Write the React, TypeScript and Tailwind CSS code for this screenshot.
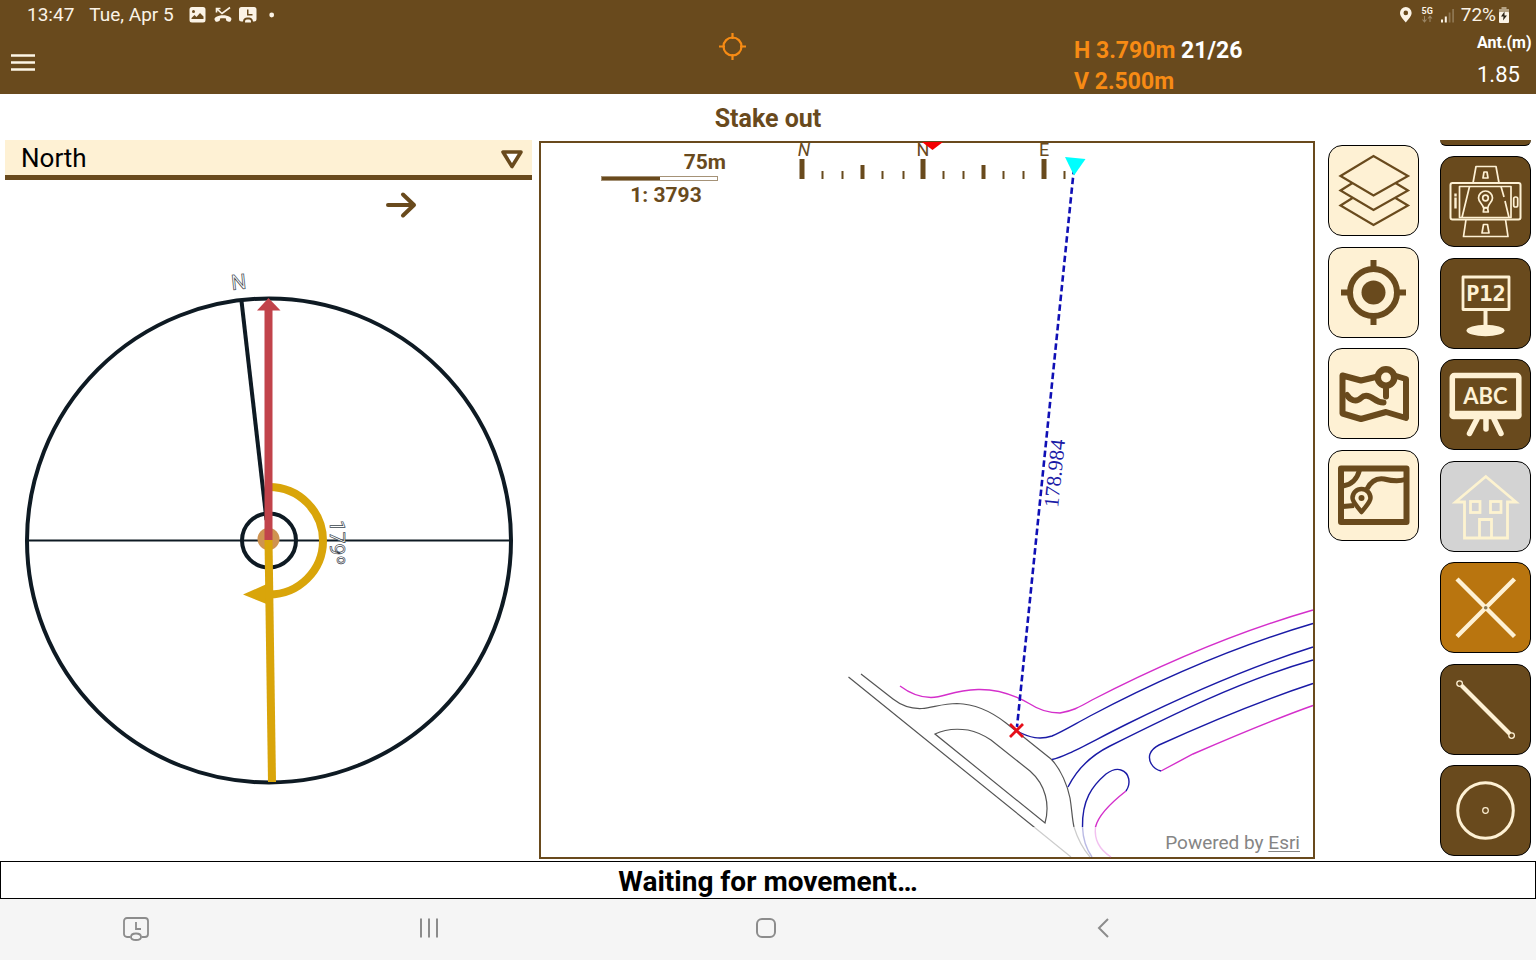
import type { ReactNode } from 'react';
import { useState } from 'react';

const directions = ['North', 'Reference', 'Forward'];

const majorTicks = [802, 923, 1044];
const middleTicks = [862, 983];
const minorTicks = [822, 842, 882, 903, 943, 963, 1003, 1023, 1064];

interface IToolButton {
  id: string;
  label: string;
  className: string;
  icon: ReactNode;
}

const mapTools: IToolButton[] = [
  {
    id: 'layers',
    label: 'Layers',
    className: 'bg-[#fef1d4] text-[#694a1d]',
    icon: (
      <g strokeWidth={2.2}>
        <path d="M12.5 31 45.5 11 80 31 45.5 50.5Z" />
        <path d="M24.5 38 12.5 45.5 45.5 65 80 45.5 67.5 38" />
        <path d="M24.5 53 12.5 60.5 45.5 80 80 60.5 67.5 53" />
      </g>
    ),
  },
  {
    id: 'center',
    label: 'Center position',
    className: 'bg-[#fef1d4] text-[#694a1d]',
    icon: (
      <g strokeWidth={6}>
        <circle cx={45.5} cy={45.5} r={23.5} />
        <circle cx={45.5} cy={45.5} r={12} fill="currentColor" stroke="none" />
        <path d="M45.5 13v8M45.5 70v8M13 45.5h8M70 45.5h8" />
      </g>
    ),
  },
  {
    id: 'base-map',
    label: 'Base map',
    className: 'bg-[#fef1d4] text-[#694a1d]',
    icon: (
      <g strokeWidth={6} strokeLinejoin="round" strokeLinecap="round">
        <path d="M50 28.5 33 32.5 14.5 27.5V65.5L33 71 58 64 78 70V31L68 28" />
        <path d="M19 47C22 52 28 55 33 50C37 46 42 48 46 51C50 54 53 54.500 55.500 54.500" />
        <circle cx={58} cy={29.5} r={8.2} strokeWidth={6.5} />
        <path d="M58 38v10.500" />
      </g>
    ),
  },
  {
    id: 'location-map',
    label: 'Location map',
    className: 'bg-[#fef1d4] text-[#694a1d]',
    icon: (
      <g strokeWidth={6}>
        <rect x={13} y={18.5} width={65.5} height={53.5} strokeLinejoin="round" />
        <path d="M31.500 20Q28 34 15 36" strokeWidth={5} />
        <path d="M39 39C43 31 49 28 56 29C64 31 70 32 77 29.500" strokeWidth={5} />
        <path d="M15 56.500 26 55.500" strokeWidth={5} />
        <path
          d="M33.500 62C29 56 24.500 52 24.500 48A9 9 0 0 1 42.500 48C42.500 52 38 56 33.500 62Z"
          fill="#fef1d4"
          strokeWidth={4.5}
          strokeLinejoin="round"
        />
        <circle cx={33.5} cy={48} r={3} fill="currentColor" stroke="none" />
      </g>
    ),
  },
];

const stakeTools: IToolButton[] = [
  {
    id: 'rotate',
    label: 'Rotate view',
    className: 'bg-[#694a1d] text-[#fef1d4]',
    icon: (
      <g strokeWidth={1.7} strokeLinejoin="round">
        <rect x={10.5} y={27} width={70} height={36.5} rx={2} strokeWidth={2} />
        <rect x={19.5} y={30.5} width={51.5} height={31} />
        <path d="M15.500 37.500v15" strokeWidth={2.4} strokeDasharray="3 1 11" />
        <rect x={73.7} y={41} width={4} height={10} rx={1.8} />
        <path d="M33 27 36 10.500H56L59 27M29.500 30.500 22 61.500M61 30.500 64 41M65 45 69 61.500M26 63.500 23.500 80.500H68L65.500 63.500" />
        <path d="M44 16h3l1 6h-5ZM43.500 68.500h4l1.500 8.500h-7ZM44 51.500h3.500l.8 4.500h-5Z" />
        <path d="M43.500 52C43 48 38.500 46 38.500 42A7 7 0 0 1 52.500 42C52.500 46 48 48 47.800 52Z" />
        <circle cx={45.5} cy={42} r={2.8} />
      </g>
    ),
  },
  {
    id: 'point',
    label: 'Stake out point',
    className: 'bg-[#694a1d] text-[#fef1d4]',
    icon: (
      <g>
        <rect x={23} y={19} width={46} height={32.5} strokeWidth={2.8} strokeLinejoin="round" />
        <path d="M45.500 52v17" strokeWidth={4} />
        <ellipse cx={45.5} cy={72.5} rx={19} ry={5.7} fill="currentColor" stroke="none" />
        <text
          x={46}
          y={43}
          textAnchor="middle"
          fill="currentColor"
          stroke="none"
          className="font-['DejaVu_Sans_Mono',monospace] text-[22px] font-bold"
        >
          P12
        </text>
      </g>
    ),
  },
  {
    id: 'labels',
    label: 'Labels',
    className: 'bg-[#694a1d] text-[#fef1d4]',
    icon: (
      <g>
        <rect x={12.3} y={16.5} width={66.5} height={39} rx={2} strokeWidth={5.5} />
        <path d="M13.500 56h64" strokeWidth={8.5} strokeLinecap="round" />
        <path d="M37 60 29.500 74.500M46 60V70M54 60 61 74.500" strokeWidth={5.5} strokeLinecap="round" />
        <text
          x={45.5}
          y={44.5}
          textAnchor="middle"
          fill="currentColor"
          stroke="none"
          className="font-[Lato,sans-serif] text-[22px] font-bold"
        >
          ABC
        </text>
      </g>
    ),
  },
  {
    id: 'building',
    label: 'Building',
    className: 'bg-[#d3d3d3] text-[#fdf3d0]',
    icon: (
      <g strokeWidth={2.8}>
        <path d="M24.500 41H15.500L45.800 15.500 76 41H67.500V77H24.500V41Z" />
        <rect x={30.5} y={40.5} width={9.5} height={11} />
        <rect x={50.5} y={40.5} width={10.5} height={11} />
        <path d="M39.500 77V58.500H51.500V77" />
      </g>
    ),
  },
  {
    id: 'cross',
    label: 'Intersection',
    className: 'bg-[#b9750f] text-[#fef1d4]',
    icon: (
      <g strokeWidth={4.4}>
        <path d="M17 17 74.500 74.500M74.500 17 17 74.500" />
        <circle cx={45.7} cy={45.7} r={3} fill="currentColor" stroke="none" />
        <circle cx={45.7} cy={45.7} r={1.8} fill="#8a7a55" stroke="none" />
      </g>
    ),
  },
  {
    id: 'line',
    label: 'Line',
    className: 'bg-[#694a1d] text-[#fef1d4]',
    icon: (
      <g>
        <path d="M21.500 21.500 70 70" strokeWidth={4.2} />
        <circle cx={19.6} cy={19.6} r={2.8} strokeWidth={1.3} fill="#694a1d" />
        <circle cx={71.6} cy={71.6} r={2.8} strokeWidth={1.3} fill="#694a1d" />
      </g>
    ),
  },
  {
    id: 'circle',
    label: 'Circle',
    className: 'bg-[#694a1d] text-[#fef1d4]',
    icon: (
      <g>
        <circle cx={45.5} cy={45.5} r={27.8} strokeWidth={3} />
        <circle cx={45.5} cy={45.5} r={2.8} strokeWidth={1.2} />
      </g>
    ),
  },
];

const ToolButton = ({ label, className, icon }: IToolButton) => (
  <button
    type="button"
    aria-label={label}
    className={`block size-[91px] shrink-0 rounded-[14px] border border-black ${className}`}
  >
    <svg viewBox="1 1 89 89" fill="none" stroke="currentColor" className="size-full">
      {icon}
    </svg>
  </button>
);

const StatusBar = () => (
  <div className="flex h-[30px] items-center justify-between pl-[27px] pr-[26px] text-[19px] leading-6 text-[#fbf3e6]">
    <div className="flex items-center">
      <span>13:47</span>
      <span className="ml-[15px]">Tue, Apr 5</span>
      <svg viewBox="0 0 90 20" className="ml-[13px] h-5 w-[90px]" fill="currentColor">
        <path
          fillRule="evenodd"
          d="M5 2H16A2.500 2.500 0 0 1 18.500 4.500V15A2.500 2.500 0 0 1 16 17.500H5A2.500 2.500 0 0 1 2.500 15V4.500A2.500 2.500 0 0 1 5 2ZM4.500 14H16.500V11.500L13 8 9.500 12 7.500 10 4.500 13ZM6.500 5A1.500 1.500 0 1 0 6.500 8 1.500 1.500 0 0 0 6.500 5Z"
        />
        <path d="M28 15.500C27 14 27.500 13 29 12C33 9.500 39 9.500 43 12C44.500 13 44.800 14 44 15.500C43.500 17 42.500 17 41 16.500C39 16 39 15.500 39 13.500C37 13 35 13 33 13.500C33 15.500 33 16 31 16.500C29.500 17 28.500 17 28 15.500Z" />
        <path d="M29.500 7.500V3.500H33.500M29.800 3.800 35 8.500 43 2.500" fill="none" stroke="currentColor" strokeWidth={1.6} />
        <path
          fillRule="evenodd"
          d="M54.500 2H67A2.500 2.500 0 0 1 69.500 4.500V14A2.500 2.500 0 0 1 67 16.500H66C65.500 13.500 64.500 12.500 61 12.500C57.500 12.500 56.500 13.500 56 16.500H54.500A2.500 2.500 0 0 1 52 14V4.500A2.500 2.500 0 0 1 54.500 2ZM60 4.500V10.500H65.500V9H61.500V4.500Z"
        />
        <path d="M58 17.500V16.500C58 15 59 14.500 61 14.500C63 14.500 64 15 64 16.500V17.500Z" />
        <circle cx={84.7} cy={10} r={2.4} />
      </svg>
    </div>
    <div className="flex items-center">
      <svg viewBox="0 0 62 24" className="h-6 w-[62px]" fill="currentColor">
        <path
          fillRule="evenodd"
          d="M6.800 19.500C2.500 14.500 1 12.500 1 9.800A5.800 5.800 0 0 1 12.600 9.800C12.600 12.500 11 14.500 6.800 19.500ZM6.800 7.600A2.300 2.300 0 1 0 6.800 12.200 2.300 2.300 0 0 0 6.800 7.600Z"
        />
        <text x={22.5} y={11} className="text-[9px] font-bold">5G</text>
        <path
          d="M25.500 13V18.500M23.500 16.500 25.500 18.800 27.500 16.500M31 19V13.500M29 15.500 31 13.200 33 15.500"
          fill="none"
          stroke="#9a8565"
          strokeWidth={1.1}
        />
        <path d="M42 16.500h2v3h-2ZM45.800 13.500h2v6h-2Z" />
        <path d="M49.700 9.500h1.800v10h-1.800ZM53.200 6h1.800v13.500h-1.800Z" fill="#8d7550" />
      </svg>
      <span>72%</span>
      <svg viewBox="0 0 12 18" className="ml-0.5 h-[18px] w-3">
        <path d="M3.500 1H8.500V3H11V7H1V3H3.500Z" fill="#b5a283" />
        <rect x={1} y={6} width={10} height={11} rx={1} fill="#fbf3e6" />
        <path d="M6.500 5.500 3 10.500H5.500L5 14.500 9 9.500H6.500Z" fill="#2c2417" />
      </svg>
    </div>
  </div>
);

const Header = () => (
  <header className="h-[94px] bg-[#694a1d] text-white">
    <StatusBar />
    <div className="grid grid-cols-[719fr_355fr_403fr_59fr] pt-[3px]">
      <button type="button" aria-label="Menu" className="ml-[10px] mt-5 h-5 w-[26px]">
        <svg viewBox="0 0 26 20" className="size-full" stroke="#fdf6e6" strokeWidth={2.4}>
          <path d="M1 2.500h24M1 9.500h24M1 16.500h24" />
        </svg>
      </button>
      <button type="button" aria-label="Position status" className="size-[27px]">
        <svg viewBox="0 0 27 27" className="size-full" fill="none" stroke="#f78b14" strokeWidth={2.2}>
          <circle cx={13.5} cy={13.5} r={9} />
          <path d="M13.500 0v6M13.500 21v6M0 13.500h6M21 13.500h6" />
        </svg>
      </button>
      <div className="pt-0.5 text-[23px] font-bold leading-[31px] text-[#f78b14]">
        <p>
          H 3.790m <span className="text-white">21/26</span>
        </p>
        <p>V 2.500m</p>
      </div>
      <div>
        <p className="text-[16px] font-bold leading-5">Ant.(m)</p>
        <p className="mt-2 text-[22px] leading-7">1.85</p>
      </div>
    </div>
  </header>
);

const Compass = () => (
  <svg viewBox="5 230 527 631" className="min-h-0 w-full flex-1" fill="none">
    <g stroke="#0e1a23">
      <circle cx={269} cy={540.5} r={242} strokeWidth={4} />
      <path d="M27 540.500H511" strokeWidth={2} />
      <path d="M241.500 301 266.500 520" strokeWidth={4} />
      <circle cx={269} cy={540.5} r={27} strokeWidth={4} />
    </g>
    <circle cx={268.5} cy={539} r={11} fill="#cf9350" />
    <path d="M269 487A54 53.750 0 0 1 269 594.500" stroke="#d9a50a" strokeWidth={8} />
    <path d="M243 594.500 269 583V605Z" fill="#d9a50a" />
    <path d="M268.500 540 272 782" stroke="#d9a50a" strokeWidth={8} />
    <path d="M268.500 540V309" stroke="#c1434b" strokeWidth={8} />
    <path d="M257 310.500 268.500 298 280.500 310.500Z" fill="#c1434b" />
    <g fill="white" stroke="#3a444c" strokeWidth={0.7} className="text-[21px]">
      <text transform="translate(232 290) rotate(-6)">N</text>
      <text transform="translate(330 520) rotate(90)">179º</text>
    </g>
  </svg>
);

const DirectionPanel = () => {
  const [direction, setDirection] = useState('North');

  return (
    <section className="flex min-w-0 flex-[527] flex-col">
      <div className="relative">
        <select
          aria-label="Direction"
          value={direction}
          onChange={e => setDirection(e.target.value)}
          className="h-10 w-full appearance-none rounded-none border-b-[5px] border-[#694a1d] bg-[#fef1d4] pl-4 pt-px text-[26px] leading-8 text-black"
        >
          {directions.map(item => (
            <option key={item}>{item}</option>
          ))}
        </select>
        <svg
          viewBox="0 0 24 20"
          className="pointer-events-none absolute right-2 top-[9px] h-5 w-6"
          fill="white"
          stroke="#694a1d"
          strokeWidth={3.6}
          strokeLinejoin="round"
        >
          <path d="M3 3H21L12 17.500Z" />
        </svg>
      </div>
      <div className="flex h-[50px] justify-center pl-[264px]">
        <button type="button" aria-label="Next" className="mt-[11px] h-7 w-8">
          <svg
            viewBox="0 0 32 28"
            className="size-full"
            fill="none"
            stroke="#694a1d"
            strokeWidth={4}
            strokeLinecap="round"
            strokeLinejoin="round"
          >
            <path d="M3 14H29M18 3.500 29 14 18 24.500" />
          </svg>
        </button>
      </div>
      <Compass />
    </section>
  );
};

const MapView = () => (
  <section className="relative mb-0.5 mt-px min-w-0 flex-[772] border-2 border-[#694a1d]">
    <svg
      viewBox="541 143 772 714"
      preserveAspectRatio="xMidYMid slice"
      className="absolute inset-0 size-full overflow-visible"
      fill="none"
    >
      <g fill="#694a1d">
        {majorTicks.map(x => (
          <rect key={x} x={x - 2.5} y={159} width={5} height={20} />
        ))}
        {middleTicks.map(x => (
          <rect key={x} x={x - 1.5} y={165} width={4} height={14} />
        ))}
        {minorTicks.map(x => (
          <rect key={x} x={x - 0.5} y={171} width={2} height={8} />
        ))}
        <g textAnchor="middle" className="text-[18px]">
          <text x={804} y={156} className="italic">N</text>
          <text x={923} y={156}>N</text>
          <text x={1044} y={156}>E</text>
        </g>
      </g>
      <path d="M922 142H943L932.500 150Z" fill="#f40000" />

      <g stroke="#555" strokeWidth={1.2}>
        <path d="M848.500 677 1034 827 1071 857" />
        <path d="M861 674 893 699C902 706 912 709 922 708.500C932 708 942 703.500 957 703.500C977 704 992 712 1006 723L1016 731 1051 759C1061 769 1068 787 1070 798C1072 810 1072 818 1074 827C1078 840 1084 850 1090 857" />
        <path d="M935 734C945 729 957 728.500 968 730C978 732 985 736 991 740L1030 771C1046 785 1050 805 1045 823Z" />
      </g>
      <g stroke="#d42fcb" strokeWidth={1.4}>
        <path d="M900 686C908 692 918 697.500 931 697.500C945 697.500 952 690 978 689.500C1000 689 1018 697 1030 704C1042 712 1052 713 1060 713C1072 711 1078 708 1092 700C1160 665 1240 631 1313 610" />
        <path d="M1161 771 1193 754C1230 738 1275 719 1313 705.500" />
        <path d="M1126 791C1112 802 1098 816 1095.500 827C1094 840 1100 850 1111 857" />
      </g>
      <g stroke="#1a1aa6" strokeWidth={1.4}>
        <path d="M1017 731C1030 738 1040 740 1052 736C1062 732 1075 724 1090 716C1160 679 1240 645 1313 623.500" />
        <path d="M1052 759.500C1065 757 1085 745 1127 724C1190 693 1250 667 1313 647" />
        <path d="M1068 787C1076 771 1088 757 1110 746C1170 716 1240 681 1313 660" />
        <path d="M1161 771C1152 769 1148 760 1150 754C1152 749 1155 747 1159 745C1205 724 1260 701 1313 683.500" />
        <path d="M1092 857C1087 850 1083 840 1082.500 827C1082 800 1092 786 1106 774C1113 769 1117 768.500 1121 770C1130 773 1131 784 1126 791" />
      </g>

      <path d="M1074 168 1017 727" stroke="#0f0fb5" strokeWidth={2.6} strokeDasharray="6.500 3.300" />
      <path d="M1065 157 1085.500 159 1074 175.500Z" fill="#00ffff" />
      <path d="M1010 724 1023 737M1023 724 1010 737" stroke="#e60f1a" strokeWidth={2.8} />
      <text
        transform="translate(1058 508) rotate(-84)"
        fill="#1a1aa6"
        className="font-['Liberation_Serif',serif] text-[21px]"
      >
        178.984
      </text>
    </svg>

    <div className="absolute left-[60px] top-[7px] w-[125px] text-[21px] font-bold leading-6 text-[#694a1d]">
      <p className="text-right">75m</p>
      <div className="mt-0.5 flex h-[5px] w-[117px] border border-[#694a1d]/60 bg-white">
        <div className="w-1/2 bg-[#694a1d]" />
      </div>
      <p className="mt-0.5 pl-[5px] text-center">1: 3793</p>
    </div>

    <p className="absolute inset-x-0 bottom-0 h-[30px] bg-white/70 pr-[13px] text-right text-[19px] leading-8 text-[#858585]">
      Powered by{' '}
      <a href="https://www.esri.com" className="underline underline-offset-2">
        Esri
      </a>
    </p>
  </section>
);

const NavigationBar = () => (
  <nav className="grid h-[61px] grid-cols-[271fr_315fr_360fr_314fr_276fr] items-center justify-items-center bg-[#f5f5f5] pb-1 text-[#8c8c8c]">
    <button type="button" aria-label="Screen tools">
      <svg viewBox="0 0 28 26" className="mt-0.5 h-[26px] w-7" fill="none" stroke="currentColor" strokeWidth={1.8}>
        <path d="M8.500 21H5A3 3 0 0 1 2 18V5A3 3 0 0 1 5 2H23A3 3 0 0 1 26 5V18A3 3 0 0 1 23 21H19.500" />
        <path d="M14 6V13H19" />
        <path d="M9 21C9 18.500 10.500 17.500 14 17.500C17.500 17.500 19 18.500 19 21C19 23.500 17.500 24 14 24C10.500 24 9 23.500 9 21Z" />
      </svg>
    </button>
    <button type="button" aria-label="Recent apps">
      <svg viewBox="0 0 20 20" className="size-5" stroke="currentColor" strokeWidth={2}>
        <path d="M2 0.500v19M10 0.500v19M18 0.500v19" />
      </svg>
    </button>
    <button type="button" aria-label="Home">
      <svg viewBox="0 0 22 22" className="size-[22px]" fill="none" stroke="currentColor" strokeWidth={2}>
        <rect x={2} y={2} width={18} height={18} rx={5} />
      </svg>
    </button>
    <button type="button" aria-label="Back">
      <svg viewBox="0 0 14 20" className="h-5 w-3.5" fill="none" stroke="currentColor" strokeWidth={2}>
        <path d="M12 1 3 10 12 19" />
      </svg>
    </button>
  </nav>
);

const App = () => (
  <div className="flex min-h-screen flex-col bg-white font-[Roboto,sans-serif]">
    <Header />
    <h1 className="h-[46px] pt-0.5 text-center text-[25px] font-bold leading-[46px] text-[#694a1d]">
      Stake out
    </h1>
    <main className="flex flex-1 px-[5px]">
      <DirectionPanel />
      <div className="w-[7px]" />
      <MapView />
      <div className="ml-[13px] mt-[5px] flex h-[396px] flex-col justify-between">
        {mapTools.map(item => (
          <ToolButton key={item.id} {...item} />
        ))}
      </div>
      <div className="ml-[21px] flex flex-col justify-between pb-[5px]">
        <div className="h-1.5 shrink-0 rounded-b-[14px] border-b border-black bg-[#694a1d]" />
        {stakeTools.map(item => (
          <ToolButton key={item.id} {...item} />
        ))}
      </div>
    </main>
    <p className="h-[38px] border border-black text-center text-[28px] font-bold leading-10 text-black">
      Waiting for movement…
    </p>
    <NavigationBar />
  </div>
);

export default App;
